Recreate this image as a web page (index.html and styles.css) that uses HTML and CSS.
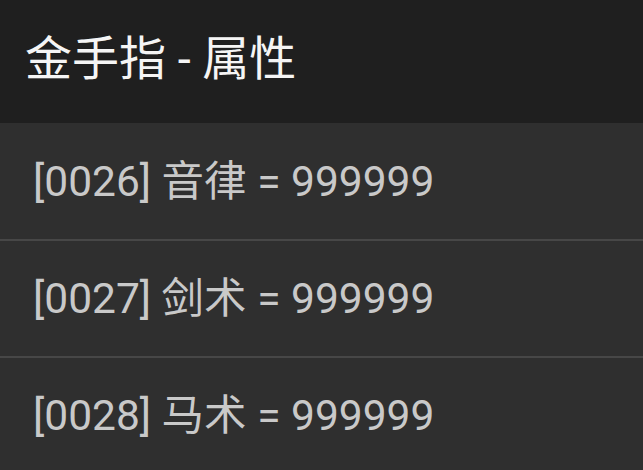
FILE: index.html
```html
<!DOCTYPE html>
<html lang="zh">
<head>
<meta charset="utf-8">
<link rel="stylesheet" href="styles.css">
</head>
<body>
<div class="app">
  <header class="bar"><h1 class="title">金手指 - 属性</h1></header>
  <ul class="list">
    <li class="row">[0026] 音律 = 999999</li>
    <li class="row">[0027] 剑术 = 999999</li>
    <li class="row">[0028] 马术 = 999999</li>
  </ul>
</div>
</body>
</html>
```
FILE: styles.css
```css
html, body {
  margin: 0;
  padding: 0;
  background: #2f2f2f;
  width: 643px;
  height: 470px;
  overflow: hidden;
}
.app {
  font-family: Roboto, "Noto Sans CJK SC", sans-serif;
}
.bar {
  height: 123px;
  background: #1f1f1f;
  display: flex;
  align-items: center;
  padding-left: 25px;
  box-sizing: border-box;
}
.title {
  margin: 0 0 7px 0;
  font-size: 47px;
  font-weight: normal;
  color: #f5f5f5;
  line-height: 1;
}
.list {
  list-style: none;
  margin: 0;
  padding: 0;
}
.row {
  height: 117px;
  box-sizing: border-box;
  display: flex;
  align-items: center;
  padding-left: 33px;
  padding-top: 2px;
  font-size: 42.5px;
  color: #c9c9c9;
  border-bottom: 2px solid #474747;
  line-height: 1;
}
.row:first-child {
  height: 118px;
}
```
